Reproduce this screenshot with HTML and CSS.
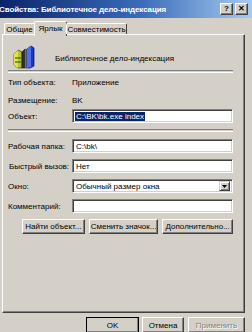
FILE: index.html
```html
<!DOCTYPE html>
<html>
<head>
<meta charset="utf-8">
<link rel="stylesheet" href="styles.css">
</head>
<body>
<div class="window">
  <div class="titlebar">
    <span class="title">Свойства: Библиотечное дело-индексация</span>
    <div class="tbtns"><span class="tbtn">?</span><span class="tbtn">✕</span></div>
  </div>
  <div class="tabs">
    <div class="tab t1">Общие</div>
    <div class="tab t2 active">Ярлык</div>
    <div class="tab t3">Совместимость</div>
  </div>
  <div class="panel">
    <div class="head">
      <svg class="icon" width="22" height="24" viewBox="0 0 22 24">
        <polygon points="1,9 5,5 9,7 9,23 5,23 1,20" fill="#b8c030" stroke="#3a3a10" stroke-width="0.7"/>
        <polygon points="1,9 5,5 5,23 1,20" fill="#e8e050"/>
        <line x1="2" y1="13" x2="8" y2="13" stroke="#508020" stroke-width="1.5"/>
        <line x1="2" y1="17" x2="8" y2="17" stroke="#508020" stroke-width="1.5"/>
        <polygon points="9,7 12,4 14,5 14,23 9,23" fill="#303038" stroke="#101010" stroke-width="0.6"/>
        <polygon points="12,4 14,5 14,23 12,23" fill="#707078"/>
        <polygon points="14,4 18,1 21,3 21,21 17,23 14,23" fill="#1838c0" stroke="#0a1050" stroke-width="0.7"/>
        <polygon points="14,4 18,1 18,22 14,23" fill="#4870f0"/>
      </svg>
      <span class="name">Библиотечное дело-индексация</span>
    </div>
    <div class="sep"></div>
    <div class="info"><span class="lbl">Тип объекта:</span><span>Приложение</span></div>
    <div class="info"><span class="lbl">Размещение:</span><span>BK</span></div>
    <div class="field"><span class="lbl">Объект:</span><div class="input"><span class="sel">C:\BK\bk.exe index</span></div></div>
    <div class="sep sep2"></div>
    <div class="fields">
      <div class="field"><span class="lbl">Рабочая папка:</span><div class="input">C:\bk\</div></div>
      <div class="field"><span class="lbl lb2">Быстрый вызов:</span><div class="input">Нет</div></div>
      <div class="field"><span class="lbl">Окно:</span><div class="input select"><span>Обычный размер окна</span><span class="arrow"><svg width="5" height="3" viewBox="0 0 5 3"><polygon points="0,0 5,0 2.5,3" fill="#000"/></svg></span></div></div>
      <div class="field"><span class="lbl">Комментарий:</span><div class="input"></div></div>
    </div>
    <div class="pbtns">
      <div class="btn b1">Найти объект...</div>
      <div class="btn b2">Сменить значок...</div>
      <div class="btn b3">Дополнительно...</div>
    </div>
  </div>
  <div class="footer">
    <div class="btn ok">OK</div>
    <div class="btn cancel">Отмена</div>
    <div class="btn apply disabled">Применить</div>
  </div>
</div>
</body>
</html>
```
FILE: styles.css
```css
html, body {
  margin: 0;
  padding: 0;
  background: #d4d0c8;
  overflow: hidden;
}
body {
  width: 252px;
  height: 332px;
  font-family: "Liberation Sans", Arial, sans-serif;
  font-size: 8px;
  color: #000;
}
.window {
  display: flex;
  flex-direction: column;
  width: 252px;
}
.titlebar {
  height: 18px;
  background: linear-gradient(to right, #0a246a 0%, #3a6ab8 55%, #a6caf0 100%);
  display: flex;
  align-items: center;
  justify-content: space-between;
  padding: 0 4px 0 0;
}
.title {
  color: #fff;
  font-weight: bold;
  font-size: 8px;
  letter-spacing: -0.1px;
  padding-left: 0;
  margin-left: -1px;
}
.tbtns {
  display: flex;
  gap: 2px;
}
.tbtn {
  width: 11px;
  height: 10px;
  background: #d4d0c8;
  border-top: 1px solid #fff;
  border-left: 1px solid #fff;
  border-right: 1px solid #404040;
  border-bottom: 1px solid #404040;
  box-shadow: inset -1px -1px #808080;
  font-size: 8px;
  font-weight: bold;
  display: flex;
  align-items: center;
  justify-content: center;
  line-height: 1;
}
.tabs {
  display: flex;
  margin-top: 3px;
  padding-left: 4px;
  height: 13px;
  align-items: flex-end;
  position: relative;
  z-index: 2;
}
.tab {
  height: 11px;
  border-top: 1px solid #fff;
  border-left: 1px solid #fff;
  border-right: 1px solid #404040;
  border-top-left-radius: 2px;
  border-top-right-radius: 2px;
  display: flex;
  align-items: center;
  justify-content: center;
  box-sizing: border-box;
  height: 11px;
}
.t1 { width: 31px; }
.t2 { width: 31px; }
.t3 { width: 61px; }
.tab.active {
  height: 15px;
  margin-bottom: -2px;
  background: #d4d0c8;
  padding-bottom: 2px;
  margin-left: -1px;
  margin-right: -1px;
  width: 33px;
}
.panel {
  margin-left: 2px;
  width: 243px;
  height: 279px;
  box-sizing: border-box;
  border-top: 1px solid #fff;
  border-left: 1px solid #fff;
  border-right: 1px solid #404040;
  border-bottom: 1px solid #404040;
  box-shadow: inset -1px -1px #808080;
  padding: 0 11px 0 5px;
  display: flex;
  flex-direction: column;
  position: relative;
  z-index: 1;
}
.head {
  height: 35px;
  display: flex;
  align-items: center;
  padding-top: 8px;
  box-sizing: border-box;
}
.icon {
  margin-left: 5px;
  margin-right: 20px;
}
.name {
  margin-top: 3px;
}
.sep {
  height: 1px;
  border-top: 1px solid #808080;
  border-bottom: 1px solid #fff;
  margin-right: 0;
}
.info {
  display: flex;
  height: 18px;
  align-items: center;
}
.info:first-of-type { margin-top: 3px; }
.lbl {
  width: 64px;
  flex: none;
}
.lb2 { padding-left: 1px; width: 63px; }
.field {
  display: flex;
  height: 14px;
  align-items: center;
}
.input {
  flex: 1;
  height: 14px;
  box-sizing: border-box;
  background: #fff;
  border-top: 1px solid #808080;
  border-left: 1px solid #808080;
  border-right: 1px solid #fff;
  border-bottom: 1px solid #fff;
  box-shadow: inset 1px 1px #404040, inset -1px -1px #d4d0c8;
  padding: 0 2px 0 3px;
  display: flex;
  align-items: center;
}
.sel {
  background: #0a246a;
  color: #fff;
  padding: 0 1px;
  margin-left: -1px;
}
.sep2 { margin-top: 6px; }
.fields {
  margin-top: 7px;
  display: flex;
  flex-direction: column;
  gap: 6px;
}
.select {
  justify-content: space-between;
  padding-right: 2px;
}
.arrow {
  width: 11px;
  height: 10px;
  box-sizing: border-box;
  background: #d4d0c8;
  border-top: 1px solid #d4d0c8;
  border-left: 1px solid #d4d0c8;
  border-right: 1px solid #404040;
  border-bottom: 1px solid #404040;
  box-shadow: inset 1px 1px #fff, inset -1px -1px #808080;
  display: flex;
  align-items: center;
  justify-content: center;
}
.pbtns {
  display: flex;
  margin-top: 6px;
  padding-left: 14px;
  gap: 4px;
}
.btn {
  height: 15px;
  box-sizing: border-box;
  border-top: 1px solid #fff;
  border-left: 1px solid #fff;
  border-right: 1px solid #404040;
  border-bottom: 1px solid #404040;
  box-shadow: inset -1px -1px #808080;
  display: flex;
  align-items: center;
  justify-content: center;
  background: #d4d0c8;
}
.b1 { width: 64px; }
.b2 { width: 71px; }
.b3 { width: 72px; }
.footer {
  display: flex;
  margin-top: 4px;
  padding-left: 86px;
  gap: 3px;
}
.ok { width: 53px; height: 16px; border-top-color: #fff; outline: 1px solid #000; outline-offset: -1px; }
.cancel { width: 42px; height: 16px; }
.apply { width: 57px; height: 16px; margin-left: 1px; }
.disabled {
  color: #808080;
  text-shadow: 1px 1px #fff;
}
```
